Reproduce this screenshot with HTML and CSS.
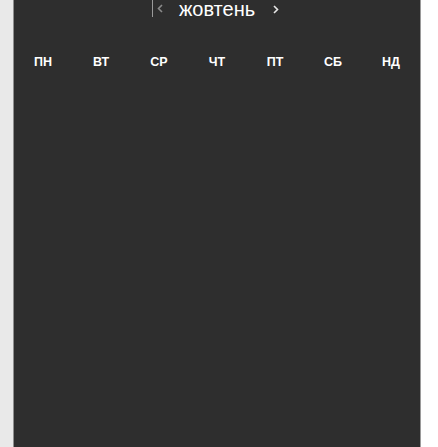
FILE: index.html
```html
<!DOCTYPE html>
<html lang="uk">
<head>
<meta charset="utf-8">
<link rel="stylesheet" href="styles.css">
</head>
<body>
<div class="gutter"></div>
<main class="panel">
  <header class="month-bar">
    <div class="prev">
      <span class="caret"></span>
      <svg class="chev" width="6" height="9" viewBox="0 0 6 9"><path d="M5 1 L1.5 4.5 L5 8" fill="none" stroke="#8a8a8a" stroke-width="1.6"/></svg>
    </div>
    <div class="month">жовтень</div>
    <div class="next">
      <svg class="chev" width="6" height="9" viewBox="0 0 6 9"><path d="M1 1 L4.5 4.5 L1 8" fill="none" stroke="#e6e6e6" stroke-width="1.6"/></svg>
    </div>
  </header>
  <div class="weekdays">
    <div>ПН</div><div>ВТ</div><div>СР</div><div>ЧТ</div><div>ПТ</div><div>СБ</div><div>НД</div>
  </div>
</main>
<div class="rest"></div>
</body>
</html>
```
FILE: styles.css
```css
html, body {
  margin: 0;
  height: 100%;
}
body {
  display: flex;
  background: #e9e9e9;
  font-family: "Liberation Sans", Arial, sans-serif;
  overflow: hidden;
}
.gutter {
  width: 13px;
  flex: none;
}
.panel {
  width: 406px;
  flex: none;
  background: #2e2e2e;
  border-left: 1px solid #8f8f8f;
  border-right: 1px solid #9a9a9a;
  color: #fff;
}
.rest {
  flex: 1;
  background: #ffffff;
}
.month-bar {
  display: grid;
  grid-template-columns: 1fr auto 1fr;
  align-items: start;
  height: 19px;
}
.prev {
  justify-self: end;
  display: flex;
  align-items: flex-start;
  margin-right: 16px;
}
.caret {
  width: 1px;
  height: 17px;
  background: #9a9a9a;
  margin-right: 4px;
}
.prev .chev {
  margin-top: 4px;
}
.month {
  font-size: 20px;
  line-height: 18px;
  color: #fff;
}
.next {
  justify-self: start;
  margin-left: 18px;
}
.next .chev {
  margin-top: 4px;
}
.weekdays {
  display: grid;
  grid-template-columns: repeat(7, 1fr);
  margin-top: 36px;
  font-size: 12.5px;
  font-weight: bold;
  line-height: 14px;
  text-align: center;
}
```
